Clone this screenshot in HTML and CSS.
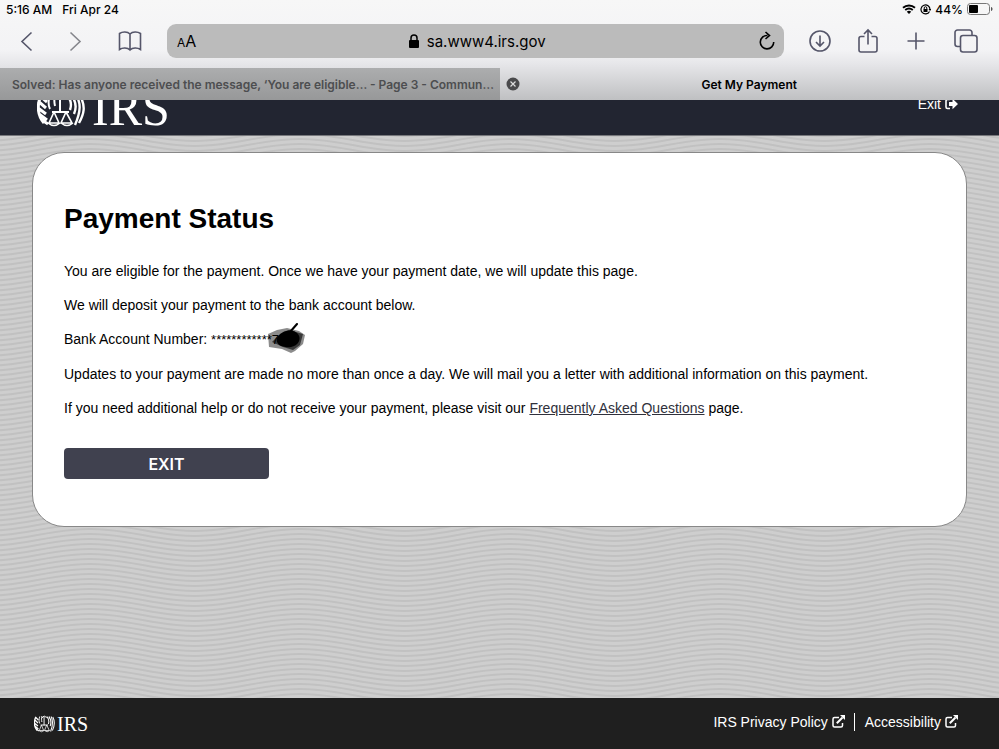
FILE: index.html
```html
<!DOCTYPE html>
<html lang="en">
<head>
<meta charset="UTF-8">
<meta name="viewport" content="width=device-width, initial-scale=1.0">
<title>Get My Payment</title>
<link rel="stylesheet" href="styles.css">
</head>
<body>

<!-- Shared shapes -->
<svg class="defs" aria-hidden="true">
  <symbol id="eagle" viewBox="0 0 48 36">
    <g fill="none" stroke="#fff" stroke-width="2">
      <path d="M4 4c-4 8-4 19 3 27M1 9l8 7M1 16l8 6M2 22l8 6M5 28l6 4M3 4l7 6" stroke-width="3"/>
      <path d="M13 3c-2 6-2 10 0 14M18 2c-1 5-1 8 0 12M23 4v17M15 20h17M18 6l5-4 6 3"/>
      <path d="M17 20l-5 11h10l-5-11M29 20l-5 11h11l-6-11M11 31q6 5 12 0M24 31q6 5 12 0" stroke-width="1.600"/>
      <path d="M29 3c5 4 6 9 4 15M34 3c5 6 6 12 3 19M39 3c5 8 5 16-1 30M43 4c6 10 4 18-1 27" stroke-width="2.400"/>
    </g>
  </symbol>
  <symbol id="external" viewBox="0 0 13 13">
    <path d="M7 2.500H2.500a1.500 1.500 0 0 0-1.500 1.500v6.500a1.500 1.500 0 0 0 1.500 1.500H9a1.500 1.500 0 0 0 1.500-1.500V8" fill="none" stroke="#fff" stroke-width="1.500"/>
    <path d="M4.800 8.200L10.500 2.500" stroke="#fff" stroke-width="2"/>
    <path d="M8 0h5v5z" fill="#fff"/>
  </symbol>
</svg>

<div class="browser">
  <div class="status-bar">
    <span>5:16 AM</span>
    <span>Fri Apr 24</span>
    <div class="status-right">
      <svg width="14" height="10" viewBox="0 0 14 10">
        <path d="M1 3.800a9 9 0 0 1 12 0M3.200 6a6 6 0 0 1 7.600 0" fill="none" stroke="#000" stroke-width="1.900"/>
        <path d="M7 10L4.800 7.700a3.200 3.200 0 0 1 4.400 0z"/>
      </svg>
      <svg width="11" height="11" viewBox="0 0 11 11">
        <path d="M9.500 7.500a4.500 4.500 0 1 1 .5-2" fill="none" stroke="#000" stroke-width="1.200"/>
        <path d="M8.500 5h3L10 7zM3.500 5h4v3h-4z"/>
        <path d="M4.200 5.500V4a1.300 1.300 0 0 1 2.600 0v1.500" fill="none" stroke="#000"/>
      </svg>
      <span>44%</span>
      <svg width="26" height="12" viewBox="0 0 26 12">
        <rect x=".5" y=".5" width="22" height="11" rx="3" fill="none" stroke="#777"/>
        <rect x="2" y="2" width="9" height="8" rx="1"/>
        <path d="M24 4c2 .5 2 3.500 0 4z" fill="#555"/>
      </svg>
    </div>
  </div>

  <div class="toolbar">
    <button class="tool" aria-label="Back">
      <svg width="24" height="24" viewBox="0 0 24 24"><path d="M16.500 3.500L7 12.500l9.500 9"/></svg>
    </button>
    <button class="tool forward" aria-label="Forward">
      <svg width="24" height="24" viewBox="0 0 24 24"><path d="M7.500 3.500L17 12.500l-9.500 9"/></svg>
    </button>
    <button class="tool" aria-label="Bookmarks">
      <svg width="24" height="24" viewBox="0 0 24 24"><path d="M12 5C9.500 2.500 4.500 2.500 1.500 4.500v16c3-2 8-2 10.500.5 2.500-2.500 7.500-2.500 10.500-.5v-16C19.500 2.500 14.500 2.500 12 5zM12 5v16"/></svg>
    </button>
    <div class="address">
      <button class="reader" aria-label="Text size"><small>A</small>A</button>
      <div class="url">
        <svg width="10" height="14" viewBox="0 0 10 14"><rect y="6" width="10" height="8" rx="1"/><path d="M2 7V4a3 3 0 0 1 6 0v3" fill="none" stroke="#000" stroke-width="1.500"/></svg>
        <span>sa.www4.irs.gov</span>
      </div>
      <button class="reload" aria-label="Reload">
        <svg width="18" height="20" viewBox="0 0 18 20"><path d="M9.500 4.500A6.700 6.700 0 1 0 15.700 11M7.500 1l4 3.500-4 3.500" fill="none" stroke="#000" stroke-width="1.600"/></svg>
      </button>
    </div>
    <button class="tool" aria-label="Downloads">
      <svg width="24" height="24" viewBox="0 0 24 24"><circle cx="12" cy="12" r="10"/><path d="M12 6.500V17M8 13l4 4 4-4"/></svg>
    </button>
    <button class="tool" aria-label="Share">
      <svg width="24" height="26" viewBox="0 0 24 26"><path d="M8.500 8.500H5a2 2 0 0 0-2 2V22a2 2 0 0 0 2 2h14a2 2 0 0 0 2-2V10.500a2 2 0 0 0-2-2h-3.500M12 16.500V2M8 6l4-4 4 4"/></svg>
    </button>
    <button class="tool" aria-label="New tab">
      <svg width="24" height="24" viewBox="0 0 24 24"><path d="M12 3.500v17M3.500 12h17"/></svg>
    </button>
    <button class="tool show-tabs" aria-label="Show tabs">
      <svg width="24" height="24" viewBox="0 0 24 24"><path d="M6.500 17.500H3.500a2.500 2.500 0 0 1-2.500-2.500V3.500A2.500 2.500 0 0 1 3.500 1h12A2.500 2.500 0 0 1 18 3.500v3"/><rect x="6.500" y="6.500" width="16.500" height="16.500" rx="2.500"/></svg>
    </button>
  </div>

  <div class="tabs">
    <div class="tab inactive">Solved: Has anyone received the message, ‘You are eligible… - Page 3 - Commun…</div>
    <div class="tab">
      <button class="close" aria-label="Close tab">
        <svg width="14" height="14" viewBox="0 0 14 14"><circle cx="7" cy="7" r="6.500" fill="#4a4a4c"/><path d="M4.500 4.500l5 5M9.500 4.500l-5 5" stroke="#ddd" stroke-width="1.200"/></svg>
      </button>
      <span class="tab-title">Get My Payment</span>
    </div>
  </div>
</div>

<!-- Header is scrolled partly under the browser bar -->
<header class="site-header">
  <div class="logo">
    <svg width="48" height="36"><use href="#eagle"/></svg>
    <span>IRS</span>
  </div>
  <a class="exit-link" href="#">Exit
    <svg width="13" height="12" viewBox="0 0 13 11"><path d="M5 1H2.500A1.500 1.500 0 0 0 1 2.500v6A1.500 1.500 0 0 0 2.500 10H5" fill="none" stroke="#fff" stroke-width="1.600"/><path d="M4 3.500h3.500V.2l5.500 5.300-5.500 5.300V7.500H4z" fill="#fff"/></svg>
  </a>
</header>

<main>
  <section class="card">
    <h1>Payment Status</h1>
    <p>You are eligible for the payment. Once we have your payment date, we will update this page.</p>
    <p>We will deposit your payment to the bank account below.</p>
    <p>Bank Account Number: <span class="account">************7
      <svg class="scribble" width="40" height="32" viewBox="0 0 40 32">
        <path d="M1 11l9-4 10-2 12 3 6 4-2 9-8 7-4 2-9-4-13-2z" opacity=".45"/>
        <path d="M5 19l6-6 11-6 14 4-3 11-7 5-10-3z" opacity=".6"/>
        <path d="M10 15c4-8 16-10 21-4 4 5 0 12-7 13-8 1-16-2-14-9z"/>
        <path d="M23 9L30 1" stroke="#000" stroke-width="2" stroke-linecap="round"/>
      </svg></span>
    </p>
    <p>Updates to your payment are made no more than once a day. We will mail you a letter with additional information on this payment.</p>
    <p>If you need additional help or do not receive your payment, please visit our <a href="#">Frequently Asked Questions</a> page.</p>
    <button class="exit-button">EXIT</button>
  </section>
</main>

<footer>
  <div class="logo small">
    <svg width="21" height="18" viewBox="0 0 48 36" preserveAspectRatio="none"><use href="#eagle" width="48" height="36"/></svg>
    <span>IRS</span>
  </div>
  <nav>
    <a href="#">IRS Privacy Policy <svg width="13" height="13"><use href="#external"/></svg></a>
    <a href="#">Accessibility <svg width="13" height="13"><use href="#external"/></svg></a>
  </nav>
</footer>

</body>
</html>
```
FILE: styles.css
```css
* {
  box-sizing: border-box;
}

body {
  margin: 0;
  min-height: 100vh;
  display: flex;
  flex-direction: column;
  font-family: "Liberation Sans", Arial, sans-serif;
  font-size: 14px;
  color: #000;
}

button {
  border: 0;
  padding: 0;
  background: none;
  font-family: inherit;
  color: inherit;
}

svg {
  flex: none;
}

.defs {
  position: absolute;
  width: 0;
  height: 0;
}

/* Browser bar */
.browser {
  font-family: Inter, sans-serif;
  background: linear-gradient(#f7f7f7, #f3f3f5 50%, #e6e6e9 64%, #bfc0c2);
}

.status-bar {
  display: flex;
  align-items: center;
  gap: 10px;
  height: 20px;
  padding: 0 6px 2px;
  font-size: 12px;
  font-weight: 500;
}

.status-right {
  display: flex;
  align-items: center;
  gap: 4px;
  margin-left: auto;
}

.toolbar {
  display: flex;
  align-items: center;
  gap: 24px;
  height: 48px;
  padding: 0 21px 6px 15px;
}

.tool {
  display: flex;
  width: 24px;
}

.tool svg {
  fill: none;
  stroke: #55566a;
  stroke-width: 1.6;
}

.forward {
  margin-right: 7px;
}

.forward svg {
  stroke: #85868c;
}

.show-tabs {
  margin-left: 2px;
}

.address {
  flex: 1;
  display: flex;
  align-items: center;
  height: 34px;
  margin-left: 1px;
  padding: 0 8px 0 10px;
  border-radius: 9px;
  background: #bbb;
}

.reader {
  font-size: 16px;
}

.reader small {
  font-size: 12px;
}

.url {
  flex: 1;
  display: flex;
  align-items: center;
  justify-content: center;
  gap: 8px;
  font-size: 15px;
}

.reload {
  display: flex;
}

.tabs {
  display: flex;
  height: 32px;
  font-size: 12px;
  font-weight: 600;
}

.tab {
  width: 50%;
  display: flex;
  align-items: center;
  padding: 0 6px;
}

.inactive {
  padding: 0 0 0 12px;
  white-space: nowrap;
  overflow: hidden;
  color: #4d4e50;
  background: linear-gradient(#acadae, #979899);
}

.close {
  display: flex;
}

.tab-title {
  flex: 1;
  text-align: center;
  padding-right: 14px;
}

/* IRS site */
.site-header {
  display: flex;
  align-items: flex-end;
  justify-content: space-between;
  height: 36px;
  padding: 0 41px 0 37px;
  overflow: hidden;
  background: #222531;
  border-bottom: 1px solid #77787c;
}

.logo {
  display: flex;
  align-items: flex-end;
  gap: 7px;
  padding-bottom: 7px;
  font-family: "Liberation Serif", serif;
  font-size: 50px;
  line-height: 40px;
  color: #fff;
}

.small {
  align-items: center;
  gap: 2px;
  padding: 0;
  font-size: 20px;
  line-height: 20px;
}

.exit-link {
  display: flex;
  align-items: center;
  gap: 4px;
  padding-bottom: 23px;
  line-height: 16px;
  color: #fff;
  text-decoration: none;
}

main {
  flex: 1;
  padding: 16px 32px;
  background: #cecece url("data:image/svg+xml,%3Csvg xmlns='http://www.w3.org/2000/svg' width='210' height='5'%3E%3Cg fill='none' stroke='%23c1c1c1' stroke-width='2'%3E%3Cpath d='M-15 -5C25 -5 50 -17 90 -17S155 -5 195 -5 260 -17 300 -17M-15 0C25 0 50 -12 90 -12S155 0 195 0 260 -12 300 -12M-15 5C25 5 50 -7 90 -7S155 5 195 5 260 -7 300 -7M-15 10C25 10 50 -2 90 -2S155 10 195 10 260 -2 300 -2M-15 15C25 15 50 3 90 3S155 15 195 15 260 3 300 3M-15 20C25 20 50 8 90 8S155 20 195 20 260 8 300 8'/%3E%3C/g%3E%3C/svg%3E");
}

.card {
  padding: 48px 31px 47px;
  border: 1px solid #888;
  border-radius: 32px;
  background: #fff;
}

h1 {
  margin: 0 0 25px;
  font-size: 28px;
  line-height: 36px;
}

p {
  margin: 0 0 16px;
  line-height: 18px;
}

p a {
  color: #30313c;
}

.account {
  position: relative;
  font-size: 13px;
}

.scribble {
  position: absolute;
  left: 56px;
  top: -9px;
}

.exit-button {
  display: block;
  width: 205px;
  height: 31px;
  margin-top: 31px;
  border-radius: 4px;
  background: #40414f;
  color: #fff;
  font-family: Inter, sans-serif;
  font-size: 16px;
  font-weight: 600;
}

footer {
  display: flex;
  align-items: center;
  justify-content: space-between;
  height: 51px;
  padding: 0 41px 0 34px;
  background: #1f1f1f;
}

nav {
  display: flex;
  padding-bottom: 4px;
}

nav a {
  display: flex;
  align-items: center;
  gap: 4px;
  line-height: 18px;
  color: #fff;
  text-decoration: none;
}

nav a + a {
  margin-left: 9px;
  padding-left: 10px;
  border-left: 1px solid #fff;
}
```
